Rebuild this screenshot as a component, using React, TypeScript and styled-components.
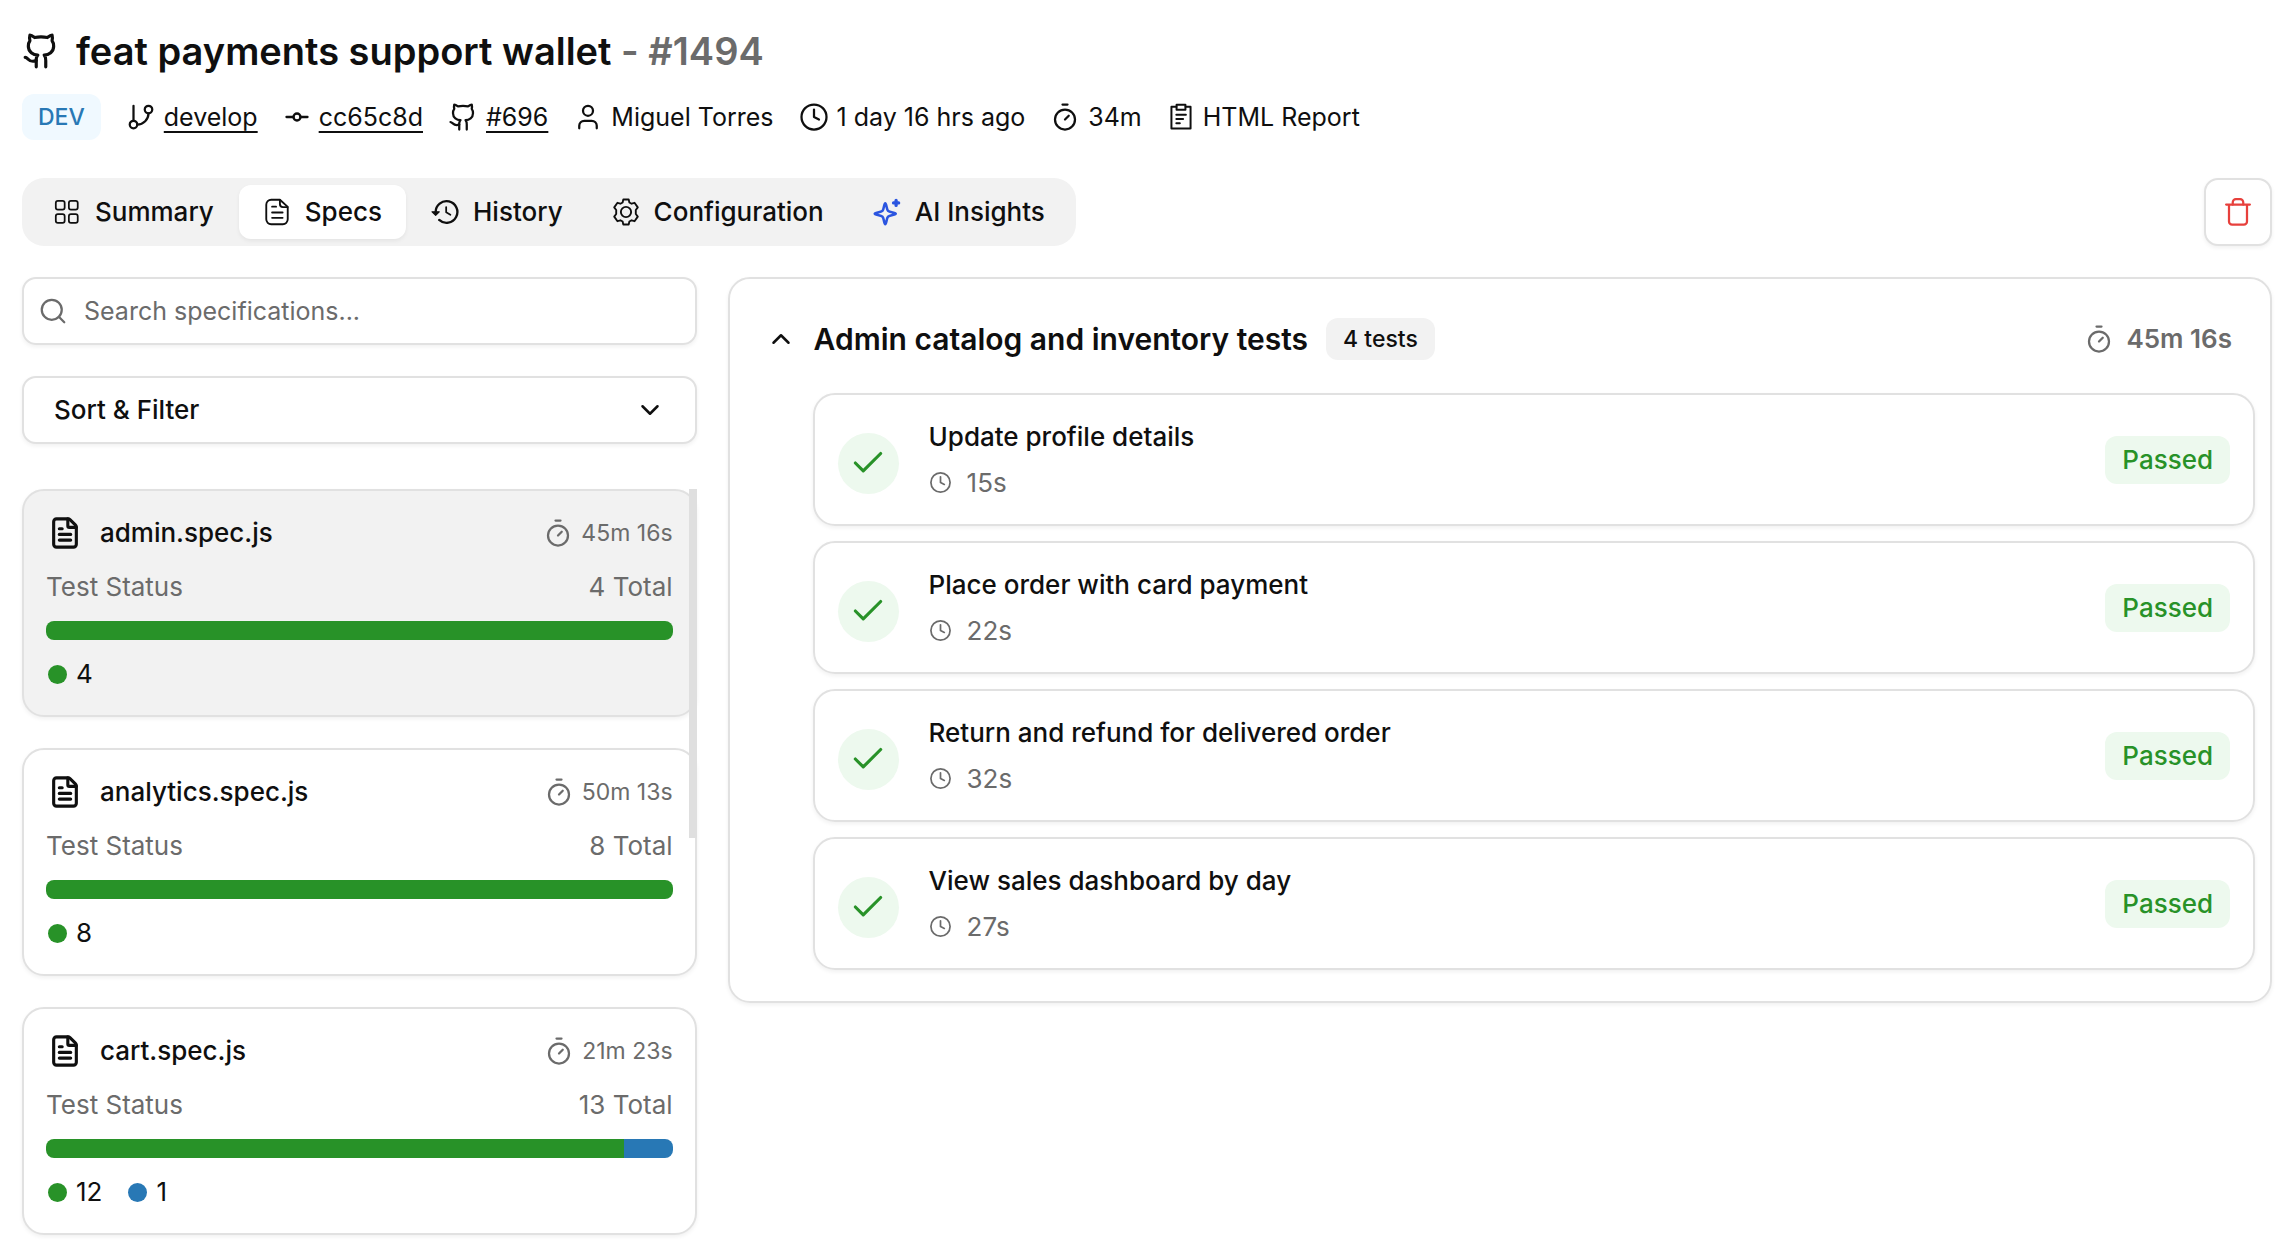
import React from "react";
import styled, { createGlobalStyle } from "styled-components";
import {
  Check, ChevronDown, ChevronUp, Clock, FileText, GitBranch, GitCommitHorizontal, Github, Search, Timer, User,
} from "lucide-react";

const ink = "#0f0f0f";
const muted = "#6b6b6b";
const line = "#e1e1e1";
const soft = "#f2f2f2";
const green = "#289228";
const greenSoft = "#edf9ee";
const blue = "#2878b5";
const lift = "0 2px 4px rgba(0, 0, 0, 0.06)";

const Global = createGlobalStyle`
  *, *::before, *::after { box-sizing: border-box; }
  body {
    margin: 0;
    background: #fff;
    color: ${ink};
    font: 400 26px/38px Inter, "Liberation Sans", sans-serif;
  }
  h1, h2, h3, p, ul { margin: 0; padding: 0; }
  ul { list-style: none; }
  button, input { font: inherit; color: inherit; }
  button { cursor: pointer; }
  svg { flex: none; display: block; }
`;

const Page = styled.main`
  min-height: 100vh;
  padding: 24px 22px;
`;

const Title = styled.h1`
  display: flex;
  align-items: center;
  gap: 16px;
  font-size: 38px;
  font-weight: 600;
  line-height: 54px;
`;

const RunNumber = styled.span`
  color: ${muted};
`;

const Meta = styled.div`
  display: flex;
  align-items: center;
  gap: 25px;
  margin-top: 16px;
  font-size: 25px;
`;

const Env = styled.span`
  padding: 4px 16px;
  border-radius: 12px;
  background: #f0f9ff;
  color: ${blue};
  font-size: 23px;
  font-weight: 500;
  line-height: 38px;
`;

const MetaItem = styled.span`
  display: flex;
  align-items: center;
  gap: 8px;
  white-space: nowrap;
`;

const MetaLink = styled.a`
  color: inherit;
  text-decoration: underline;
  text-decoration-thickness: 2px;
  text-underline-offset: 5px;
`;

const Toolbar = styled.div`
  display: flex;
  align-items: center;
  justify-content: space-between;
  margin-top: 38px;
`;

const Tabs = styled.nav`
  display: flex;
  gap: 1px;
  padding: 7px;
  border-radius: 22px;
  background: ${soft};
`;

const Tab = styled.button<{ $active?: boolean }>`
  display: flex;
  align-items: center;
  gap: 14px;
  height: 54px;
  padding: 0 24px;
  border: 0;
  border-radius: 12px;
  background: ${(p) => (p.$active ? "#fff" : "transparent")};
  box-shadow: ${(p) => (p.$active ? lift : "none")};
  font-weight: 500;
`;

const DeleteButton = styled.button`
  display: grid;
  place-items: center;
  width: 68px;
  height: 68px;
  padding: 0;
  border: 2px solid ${line};
  border-radius: 14px;
  background: #fff;
  box-shadow: ${lift};
  color: #e7403c;
`;

const Columns = styled.div`
  display: grid;
  grid-template-columns: minmax(0, 304fr) minmax(0, 696fr);
  gap: 31px;
  align-items: start;
  margin-top: 31px;
`;

const Sidebar = styled.aside`
  display: flex;
  flex-direction: column;
`;

const SearchBox = styled.label`
  display: flex;
  align-items: center;
  gap: 16px;
  height: 68px;
  padding: 0 14px;
  border: 2px solid ${line};
  border-radius: 14px;
  box-shadow: ${lift};
  color: ${muted};
`;

const SearchInput = styled.input`
  flex: 1;
  min-width: 0;
  padding: 0;
  border: 0;
  outline: 0;
  background: transparent;
  color: ${ink};
  font-size: 25px;
  &::placeholder { color: ${muted}; opacity: 1; }
`;

const FilterButton = styled.button`
  display: flex;
  align-items: center;
  justify-content: space-between;
  height: 68px;
  margin-top: 31px;
  padding: 0 30px;
  border: 2px solid ${line};
  border-radius: 14px;
  background: #fff;
  box-shadow: ${lift};
  font-weight: 500;
`;

const SpecScroll = styled.div`
  position: relative;
  margin-top: 45px;
`;

const ScrollThumb = styled.div`
  position: absolute;
  top: 0;
  right: 0;
  width: 8px;
  height: 349px;
  background: #dfdfdf;
`;

const SpecList = styled.ul`
  display: flex;
  flex-direction: column;
  gap: 31px;
`;

const SpecCard = styled.li<{ $active?: boolean }>`
  padding: 23px 22px 22px;
  border: 2px solid ${line};
  border-radius: 22px;
  background: ${(p) => (p.$active ? soft : "#fff")};
  box-shadow: ${lift};
`;

const Split = styled.div`
  display: flex;
  align-items: center;
  justify-content: space-between;
`;

const SpecName = styled.h3`
  display: flex;
  align-items: center;
  gap: 18px;
  padding-left: 2px;
  font-size: 26px;
  font-weight: 500;
  line-height: 38px;
`;

const SpecTime = styled.span`
  display: flex;
  align-items: center;
  gap: 8px;
  color: ${muted};
  font-size: 23px;
`;

const StatusLine = styled(Split)`
  margin-top: 16px;
  color: ${muted};
`;

const Bar = styled.div`
  display: flex;
  height: 19px;
  margin-top: 15px;
  border-radius: 8px;
  overflow: hidden;
`;

const Segment = styled.div<{ $color: string; $share: number }>`
  flex: ${(p) => p.$share} 0 0;
  background: ${(p) => p.$color};
`;

const Legend = styled.div`
  display: flex;
  gap: 26px;
  margin-top: 15px;
  padding: 0 2px;
`;

const Count = styled.span<{ $color: string }>`
  display: flex;
  align-items: center;
  gap: 9px;
  &::before {
    content: "";
    width: 19px;
    height: 19px;
    border-radius: 50%;
    background: ${(p) => p.$color};
  }
`;

const Panel = styled.section`
  padding: 39px 15px 31px 36px;
  border: 2px solid ${line};
  border-radius: 22px;
  box-shadow: ${lift};
`;

const SuiteHead = styled.header`
  display: flex;
  align-items: center;
  gap: 18px;
  padding-right: 23px;
`;

const SuiteToggle = styled.button`
  display: grid;
  place-items: center;
  padding: 0;
  border: 0;
  background: transparent;
`;

const SuiteTitle = styled.h2`
  font-size: 30px;
  font-weight: 600;
  line-height: 42px;
`;

const TestCount = styled.span`
  padding: 0 17px;
  border-radius: 12px;
  background: ${soft};
  font-size: 23px;
  font-weight: 500;
  line-height: 42px;
`;

const SuiteTime = styled.span`
  display: flex;
  align-items: center;
  gap: 12px;
  margin-left: auto;
  color: ${muted};
  font-weight: 600;
`;

const TestList = styled.ul`
  display: flex;
  flex-direction: column;
  gap: 15px;
  margin: 33px 0 0 47px;
`;

const TestCard = styled.li`
  display: flex;
  align-items: center;
  height: 133px;
  padding: 0 23px;
  border: 2px solid ${line};
  border-radius: 22px;
  box-shadow: ${lift};
`;

const PassMark = styled.span`
  display: grid;
  place-items: center;
  width: 61px;
  height: 61px;
  margin-top: 7px;
  border-radius: 50%;
  background: ${greenSoft};
  color: ${green};
`;

const TestBody = styled.div`
  display: grid;
  gap: 8px;
  margin-left: 30px;
`;

const TestName = styled.h3`
  font-size: 26px;
  font-weight: 500;
  line-height: 38px;
`;

const TestTime = styled.p`
  display: flex;
  align-items: center;
  gap: 15px;
  color: ${muted};
`;

const Status = styled.span`
  margin-left: auto;
  padding: 5px 17px;
  border-radius: 12px;
  background: ${greenSoft};
  color: ${green};
  font-weight: 500;
`;

const Glyph = ({ size = 28, color = "currentColor", width = 1.5, children }: {
  size?: number; color?: string; width?: number; children: React.ReactNode;
}) => (
  <svg width={size} height={size} viewBox="0 0 24 24" fill="none" stroke={color} strokeWidth={width}
    strokeLinecap="round" strokeLinejoin="round" aria-hidden="true">{children}</svg>
);

const GridIcon = () => (
  <Glyph>
    <rect x="2.4" y="2.4" width="7.6" height="7.6" rx="1.8" />
    <rect x="13.6" y="2.4" width="7.6" height="7.6" rx="1.8" />
    <rect x="2.4" y="13.8" width="7.6" height="7.6" rx="1.8" />
    <rect x="13.6" y="13.8" width="7.6" height="7.6" rx="1.8" />
  </Glyph>
);

const SpecsIcon = () => (
  <Glyph width={1.6}>
    <path d="M14.5 1.5H7a4.200 4.200 0 0 0-4.200 4.200v12.600A4.200 4.200 0 0 0 7 22.500h10a4.200 4.200 0 0 0 4.200-4.200V7.600Z" />
    <path d="M14.5 1.800v3.400a2.600 2.600 0 0 0 2.600 2.600h3.900" />
    <path d="M7.800 7.400h3.400M7.800 12.400h9M7.800 17h9" />
  </Glyph>
);

const HistoryIcon = () => (
  <Glyph>
    <path d="M4 12.200a9.300 9.300 0 1 1 3 6.600" strokeWidth="2" />
    <path d="M.9 11.800h6.200L4 14.800Z" fill="currentColor" strokeWidth="1" />
    <path d="M13 7.800v4.400l3.600 2.200" />
  </Glyph>
);

const GearIcon = () => (
  <Glyph width={1.6}>
    <path d="M9.700 1.300h4.600l.6 2.500 1.900 1.100 2.500-.8 2.800 3.900-1.700 2.300v3.400l1.700 2.300-2.800 3.900-2.500-.8-1.900 1.100-.6 2.500H9.700l-.6-2.500-1.900-1.100-2.500.8-2.800-3.900 1.700-2.300v-3.400L1.900 8l2.800-3.900 2.500.8 1.900-1.100Z" />
    <circle cx="12" cy="12" r="4.4" />
  </Glyph>
);

const SparkIcon = () => (
  <Glyph color="#2b55e0" width={2.2}>
    <path d="M10.500 4.500c1 0 1 5.200 2.400 6.600s6.600 1.400 6.600 2.400-5.200 1-6.600 2.400-1.400 6.600-2.400 6.600-1-5.200-2.400-6.600-6.600-1.400-6.600-2.400 5.200-1 6.600-2.400 1.400-6.600 2.400-6.600Z" />
    <path d="M19.800 2v4.400M17.600 4.200h4.400" strokeWidth="2.8" />
  </Glyph>
);

const ReportIcon = () => (
  <Glyph size={28} width={1.7}>
    <path d="M8 3.200H3.800v18.600h16.400V3.200H16" />
    <path d="M8.200 1.500h7.600v4.200H8.200Z" />
    <path d="M8 10h8.200M8 13.700h5.800M8 17.400h3" />
  </Glyph>
);

const TrashIcon = () => (
  <Glyph size={30} width={1.8}>
    <path d="M2.500 6h19M4.800 6v13.500A2.500 2.500 0 0 0 7.300 22h9.400a2.500 2.500 0 0 0 2.500-2.500V6" />
    <path d="M7.800 6V4.200a2.500 2.500 0 0 1 2.500-2.500h3.400a2.500 2.500 0 0 1 2.500 2.500V6" />
  </Glyph>
);

const specs = [
  { name: "admin.spec.js", time: "45m 16s", passed: 4, skipped: 0 },
  { name: "analytics.spec.js", time: "50m 13s", passed: 8, skipped: 0 },
  { name: "cart.spec.js", time: "21m 23s", passed: 12, skipped: 1 },
];

const tests = [
  { name: "Update profile details", time: "15s" },
  { name: "Place order with card payment", time: "22s" },
  { name: "Return and refund for delivered order", time: "32s" },
  { name: "View sales dashboard by day", time: "27s" },
];

export default function App() {
  return (
    <Page>
      <Global />
      <Title>
        <Github size={38} strokeWidth={2} />
        <span>feat payments support wallet <RunNumber>- #1494</RunNumber></span>
      </Title>
      <Meta>
        <Env>DEV</Env>
        <MetaItem><GitBranch size={30} strokeWidth={1.8} /><MetaLink href="#branch">develop</MetaLink></MetaItem>
        <MetaItem><GitCommitHorizontal size={28} strokeWidth={2} /><MetaLink href="#commit">cc65c8d</MetaLink></MetaItem>
        <MetaItem><Github size={30} strokeWidth={1.8} /><MetaLink href="#pull">#696</MetaLink></MetaItem>
        <MetaItem><User size={30} strokeWidth={1.8} />Miguel Torres</MetaItem>
        <MetaItem><Clock size={30} strokeWidth={1.8} />1 day 16 hrs ago</MetaItem>
        <MetaItem><Timer size={30} strokeWidth={1.8} />34m</MetaItem>
        <MetaItem><ReportIcon />HTML Report</MetaItem>
      </Meta>
      <Toolbar>
        <Tabs aria-label="Run sections">
          <Tab type="button"><GridIcon />Summary</Tab>
          <Tab type="button" $active aria-current="page"><SpecsIcon />Specs</Tab>
          <Tab type="button"><HistoryIcon />History</Tab>
          <Tab type="button"><GearIcon />Configuration</Tab>
          <Tab type="button"><SparkIcon />AI Insights</Tab>
        </Tabs>
        <DeleteButton type="button" aria-label="Delete run"><TrashIcon /></DeleteButton>
      </Toolbar>
      <Columns>
        <Sidebar>
          <SearchBox>
            <Search size={30} strokeWidth={1.8} />
            <SearchInput type="text" placeholder="Search specifications..." aria-label="Search specifications" />
          </SearchBox>
          <FilterButton type="button">Sort &amp; Filter<ChevronDown size={30} strokeWidth={2} /></FilterButton>
          <SpecScroll>
            <SpecList>
              {specs.map((s, i) => (
                <SpecCard key={s.name} $active={i === 0}>
                  <Split>
                    <SpecName><FileText size={34} strokeWidth={2.2} />{s.name}</SpecName>
                    <SpecTime><Timer size={30} strokeWidth={1.8} />{s.time}</SpecTime>
                  </Split>
                  <StatusLine><span>Test Status</span><span>{s.passed + s.skipped} Total</span></StatusLine>
                  <Bar>
                    <Segment $color={green} $share={s.passed} />
                    {s.skipped > 0 && <Segment $color={blue} $share={s.skipped} />}
                  </Bar>
                  <Legend>
                    <Count $color={green}>{s.passed}</Count>
                    {s.skipped > 0 && <Count $color={blue}>{s.skipped}</Count>}
                  </Legend>
                </SpecCard>
              ))}
            </SpecList>
            <ScrollThumb />
          </SpecScroll>
        </Sidebar>
        <Panel>
          <SuiteHead>
            <SuiteToggle type="button" aria-label="Collapse suite"><ChevronUp size={30} strokeWidth={2} /></SuiteToggle>
            <SuiteTitle>Admin catalog and inventory tests</SuiteTitle>
            <TestCount>4 tests</TestCount>
            <SuiteTime><Timer size={30} strokeWidth={1.8} />45m 16s</SuiteTime>
          </SuiteHead>
          <TestList>
            {tests.map((t) => (
              <TestCard key={t.name}>
                <PassMark><Check size={38} strokeWidth={2} /></PassMark>
                <TestBody>
                  <TestName>{t.name}</TestName>
                  <TestTime><Clock size={23} strokeWidth={1.8} />{t.time}</TestTime>
                </TestBody>
                <Status>Passed</Status>
              </TestCard>
            ))}
          </TestList>
        </Panel>
      </Columns>
    </Page>
  );
}
